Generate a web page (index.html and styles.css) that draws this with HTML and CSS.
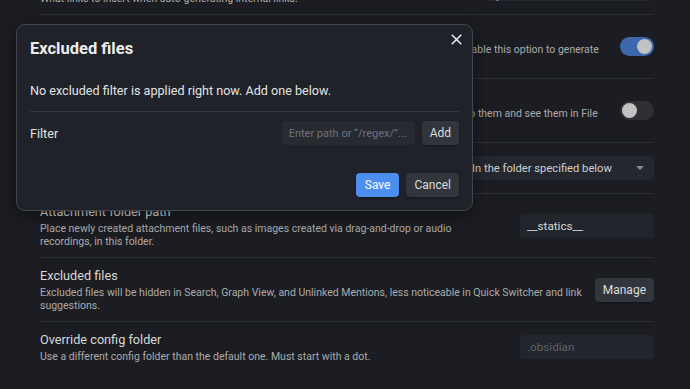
FILE: index.html
```html
<!DOCTYPE html>
<html>
<head>
<meta charset="utf-8">
<link rel="stylesheet" href="styles.css">
</head>
<body>
<div class="settings">
  <div class="item">
    <div class="info">
      <div class="name">New link format</div>
      <div class="desc">What links to insert when auto-generating internal links.</div>
    </div>
    <div class="control"><div class="dropdown">Shortest path when possible<span class="caret"></span></div></div>
  </div>
  <div class="item">
    <div class="info">
      <div class="name">Use [[Wikilinks]]</div>
      <div class="desc">Auto-generate Wikilinks for [[links]] and [[images]] instead of Markdown links and images. Disable this option to generate Markdown links instead.</div>
    </div>
    <div class="control"><div class="toggle on"><span class="knob"></span></div></div>
  </div>
  <div class="item">
    <div class="info">
      <div class="name">Detect all file extensions</div>
      <div class="desc">Show files with any extension even if Obsidian can't open them natively, so that you can link to them and see them in File explorer and Quick Switcher.</div>
    </div>
    <div class="control"><div class="toggle"><span class="knob"></span></div></div>
  </div>
  <div class="item">
    <div class="info">
      <div class="name">Default location for new attachments</div>
      <div class="desc">Where newly added attachments are placed.</div>
    </div>
    <div class="control"><div class="dropdown wide">In the folder specified below<span class="caret"></span></div></div>
  </div>
  <div class="item">
    <div class="info">
      <div class="name">Attachment folder path</div>
      <div class="desc">Place newly created attachment files, such as images created via drag-and-drop or audio recordings, in this folder.</div>
    </div>
    <div class="control input-control"><input class="text-input" type="text" value="__statics__"></div>
  </div>
  <div class="item">
    <div class="info">
      <div class="name">Excluded files</div>
      <div class="desc">Excluded files will be hidden in Search, Graph View, and Unlinked Mentions, less noticeable in Quick Switcher and link suggestions.</div>
    </div>
    <div class="control"><button class="btn">Manage</button></div>
  </div>
  <div class="item">
    <div class="info">
      <div class="name">Override config folder</div>
      <div class="desc">Use a different config folder than the default one. Must start with a dot.</div>
    </div>
    <div class="control input-control"><input class="text-input" type="text" placeholder=".obsidian"></div>
  </div>
</div>

<div class="modal">
  <div class="modal-close">
    <svg width="11" height="11" viewBox="0 0 11 11"><path d="M1.2 1.2 L9.8 9.8 M9.8 1.2 L1.2 9.8" stroke="#e8e8e8" stroke-width="1.6" stroke-linecap="round"/></svg>
  </div>
  <div class="modal-title">Excluded files</div>
  <div class="modal-msg">No excluded filter is applied right now. Add one below.</div>
  <div class="modal-row">
    <div class="modal-label">Filter</div>
    <div class="modal-controls">
      <input class="filter-input" type="text" placeholder="Enter path or “/regex/”...">
      <button class="btn">Add</button>
    </div>
  </div>
  <div class="modal-buttons">
    <button class="btn primary">Save</button>
    <button class="btn">Cancel</button>
  </div>
</div>
</body>
</html>
```

FILE: styles.css
```css
* { box-sizing: border-box; }
html, body {
  margin: 0;
  height: 100%;
  background: #1b1d22;
  overflow: hidden;
}
body {
  font-family: Roboto, "Noto Sans", sans-serif;
  color: #dadada;
  position: relative;
}
.settings {
  margin: -36px 36px 0 40px;
}
.item {
  display: flex;
  align-items: center;
  gap: 8px;
  padding: 9px 0;
  border-top: 1px solid #2c2f35;
}
.item:first-child { border-top: none; }
.info { flex: 1; min-width: 0; }
.name {
  font-size: 12.7px;
  line-height: 17px;
  color: #d8d8d8;
  margin-bottom: 2px;
}
.desc {
  font-size: 10.5px;
  line-height: 13px;
  color: #ababab;
}
.control { flex: none; display: flex; align-items: center; }
.input-control { padding-left: 14px; }
.dropdown {
  width: 170px;
  height: 24px;
  display: flex;
  align-items: center;
  justify-content: space-between;
  padding: 0 10px 0 12px;
  background: #24272e;
  border-radius: 5px;
  font-size: 11.2px;
  color: #d0d0d0;
}
.dropdown.wide { width: 194px; }
.caret {
  width: 0; height: 0;
  border-left: 4px solid transparent;
  border-right: 4px solid transparent;
  border-top: 4px solid #8a8a8a;
}
.toggle {
  width: 34px; height: 19px;
  border-radius: 10px;
  background: #2e3035;
  position: relative;
}
.toggle.on { background: #3d68ad; }
.knob {
  position: absolute;
  top: 2px; left: 2px;
  width: 15px; height: 15px;
  border-radius: 50%;
  background: #c2c2c2;
}
.toggle.on .knob { left: 17px; }
.text-input {
  width: 134px; height: 24px;
  background: #22252c;
  border: none;
  border-radius: 4px;
  padding: 0 7px;
  font-family: inherit;
  font-size: 11.7px;
  color: #d8d8d8;
  outline: none;
}
.text-input::placeholder { color: #5e6168; }
.btn {
  height: 24px;
  padding: 0 8px;
  background: #32353c;
  border: none;
  border-radius: 4px;
  font-family: inherit;
  font-size: 12px;
  color: #dcdcdc;
  box-shadow: 0 1px 2px rgba(0,0,0,0.35);
}
.btn.primary {
  padding: 0 9px;
  background: #4b8ef0;
  color: #ffffff;
}

.modal {
  position: absolute;
  left: 16px; top: 24px;
  width: 457px; height: 187px;
  background: #1f2229;
  border: 1px solid #43464d;
  border-radius: 9px;
  padding: 13px 13px 13px 13px;
  box-shadow: 0 4px 18px rgba(0,0,0,0.45);
}
.modal-close {
  position: absolute;
  top: 9px; right: 10px;
  width: 11px; height: 11px;
  display: flex;
}
.modal-title {
  font-size: 16.5px;
  font-weight: 700;
  line-height: 22px;
  color: #ececec;
}
.modal-msg {
  margin-top: 22px;
  font-size: 12.6px;
  line-height: 18px;
  color: #e2e2e2;
  padding-bottom: 11px;
}
.modal-row {
  display: flex;
  align-items: center;
  border-top: 1px solid #33363c;
  padding: 9px 0;
}
.modal-label {
  flex: 1;
  font-size: 12.6px;
  color: #e2e2e2;
}
.modal-controls { display: flex; gap: 7px; }
.filter-input {
  width: 133px; height: 24px;
  background: #272a31;
  border: none;
  border-radius: 4px;
  padding: 0 7px;
  font-family: inherit;
  font-size: 11px;
  color: #d8d8d8;
  outline: none;
}
.filter-input::placeholder { color: #6e727a; }
.modal-buttons {
  display: flex;
  justify-content: flex-end;
  gap: 7px;
  margin-top: 19px;
}
```
